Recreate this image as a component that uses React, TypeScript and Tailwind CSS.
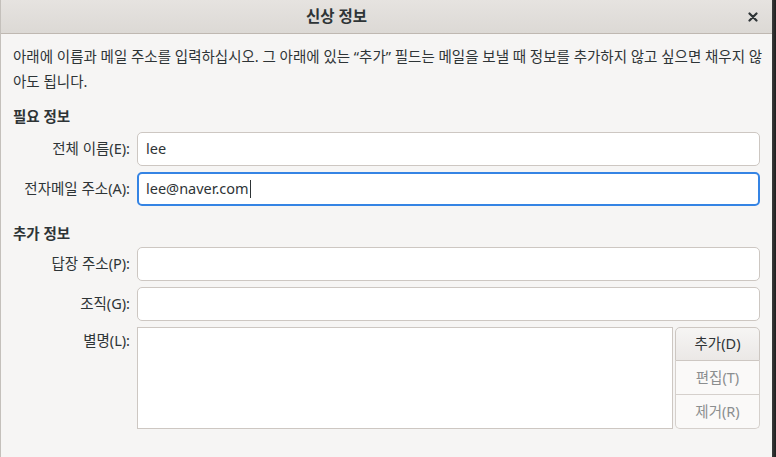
import React from 'react';

const font = { fontFamily: '"Noto Sans", "Noto Sans CJK KR", sans-serif' };

const Field: React.FC<{ label: string; value?: string; focused?: boolean }> = ({ label, value, focused }) => (
  <div className="flex items-center h-[34px]">
    <div className="w-[118px] text-right text-[14.5px] text-[#2e3436] pr-[1px] whitespace-nowrap">{label}</div>
    <div
      className={
        focused
          ? 'ml-[6px] flex-1 h-[34px] rounded-[5px] border-2 border-[#3584e4] bg-white flex items-center pl-[7px] text-[14.5px] text-[#2e3436]'
          : 'ml-[6px] flex-1 h-[34px] rounded-[5px] border border-[#cdc7c2] bg-white flex items-center pl-[8px] text-[14.5px] text-[#2e3436]'
      }
    >
      {value}
      {focused && <span className="inline-block w-[1px] h-[18px] bg-[#2e3436] ml-[1px]" />}
    </div>
  </div>
);

export default function App() {
  return (
    <div className="w-[776px] h-[457px] flex bg-[#2a2a2a]" style={font}>
      <div className="w-[772px] h-[457px] flex flex-col bg-[#f6f5f4] border-l border-[#c4c0bb]">
        <div className="h-[34px] flex items-center relative bg-gradient-to-b from-[#e6e3e0] to-[#dcd9d5] border-b border-[#bfb8b1]">
          <div className="absolute left-[305px] top-[5px] text-[15.5px] font-bold text-[#2e3436]">신상 정보</div>
          <svg className="absolute left-[747px] top-[12px]" width="10" height="10" viewBox="0 0 10 10">
            <path d="M1.5 1.5 L8.5 8.5 M8.5 1.5 L1.5 8.5" stroke="#2e3436" strokeWidth="2.2" strokeLinecap="round" />
          </svg>
        </div>

        <div className="pl-[12px] pr-[12px] pt-[10px]">
          <div className="text-[14.5px] leading-[25px] text-[#2e3436] whitespace-nowrap">
            <div>아래에 이름과 메일 주소를 입력하십시오. 그 아래에 있는 “추가” 필드는 메일을 보낼 때 정보를 추가하지 않고 싶으면 채우지 않</div>
            <div>아도 됩니다.</div>
          </div>

          <div className="mt-[11px] h-[22px] leading-[22px] text-[14.5px] font-bold text-[#2e3436]">필요 정보</div>
          <div className="mt-[5px] flex flex-col gap-[6px]">
            <Field label="전체 이름(E):" value="lee" />
            <Field label="전자메일 주소(A):" value="lee@naver.com" focused />
          </div>

          <div className="mt-[16px] h-[22px] leading-[22px] text-[14.5px] font-bold text-[#2e3436]">추가 정보</div>
          <div className="mt-[3px] flex flex-col gap-[6px]">
            <Field label="답장 주소(P):" />
            <Field label="조직(G):" />
            <div className="flex">
              <div className="w-[118px] text-right text-[14.5px] text-[#2e3436] pr-[1px] pt-[3px]">별명(L):</div>
              <div className="ml-[6px] flex-1 h-[102px] border border-[#cdc7c2] bg-white" />
              <div className="ml-[2px] w-[85px] flex flex-col">
                <div className="h-[34px] flex items-center justify-center rounded-t-[5px] border border-[#cdc7c2] bg-gradient-to-b from-[#f6f5f4] to-[#ebe8e6] text-[14.5px] text-[#2e3436]">
                  추가(D)
                </div>
                <div className="h-[34px] flex items-center justify-center border-x border-b border-[#d5d0cc] bg-[#faf9f8] text-[14.5px] text-[#8b8e8f]">
                  편집(T)
                </div>
                <div className="h-[34px] flex items-center justify-center rounded-b-[5px] border-x border-b border-[#d5d0cc] bg-[#faf9f8] text-[14.5px] text-[#8b8e8f]">
                  제거(R)
                </div>
              </div>
            </div>
          </div>
        </div>
      </div>
      <div className="w-[4px] h-[457px] bg-gradient-to-r from-[#3c3c3c] to-[#1e1e1e]" />
    </div>
  );
}
